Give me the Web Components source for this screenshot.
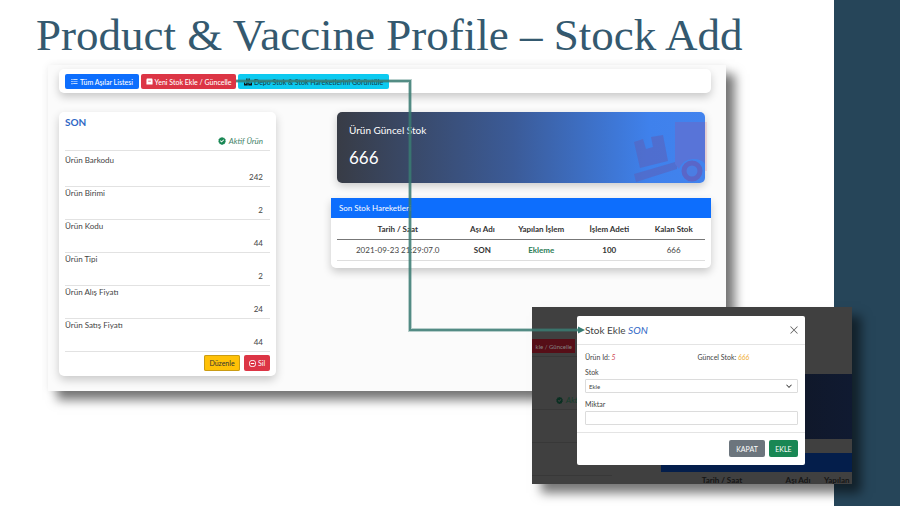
<!DOCTYPE html>
<html lang="tr">
<head>
<meta charset="utf-8">
<title>Product &amp; Vaccine Profile – Stock Add</title>
<style>
body { margin: 0; font-family: Lato, "Open Sans", sans-serif; color: #444; background: #fff; }
</style>
</head>
<body>
<deck-slide>
  <span slot="title">Product &amp; Vaccine Profile – Stock Add</span>
  <stock-page></stock-page>
  <modal-shot slot="inset"></modal-shot>
  <flow-arrow slot="arrow"></flow-arrow>
</deck-slide>

<script>
function define(name, html) {
  const t = document.createElement('template');
  t.innerHTML = html;
  customElements.define(name, class extends HTMLElement {
    constructor() {
      super();
      this.attachShadow({ mode: 'open' }).append(t.content.cloneNode(true));
    }
  });
}

define('deck-slide', `
<style>
:host { display: grid; grid-template-columns: minmax(0,1fr) 66px; min-height: 100vh; position: relative; overflow: hidden; }
main { padding: 10px 108px 0 48px; }
aside { background: #264559; }
h1 { margin: 0 -36px 5px -12px; font: 400 45px/50px "Liberation Serif", serif; color: #34596f; white-space: nowrap; }
.inset { position: absolute; right: 48px; top: 307px; }
.arrow { position: absolute; left: 236px; top: 78px; }
</style>
<main><h1><slot name="title"></slot></h1><slot></slot></main>
<aside></aside>
<div class="inset"><slot name="inset"></slot></div>
<div class="arrow"><slot name="arrow"></slot></div>`);

define('flow-arrow', `
<style>:host, svg { display: block; }</style>
<svg width="350" height="258" viewBox="0 0 350 258" fill="none" aria-hidden="true">
<path d="M0 3H174V252H343" stroke="#397b72" stroke-opacity=".35" stroke-width="4"/>
<path d="M0 3H174V252H343" stroke="#397b72" stroke-opacity=".8" stroke-width="2"/>
<path d="M342 248.500l7 3.500-7 3.500z" fill="#397b72"/>
</svg>`);

define('ui-icon', '<style>:host { display: inline-block; line-height: 0; } svg { display: block; width: 100%; height: 100%; }</style><svg viewBox="0 0 16 16" fill="currentColor" aria-hidden="true"></svg>');
const ICONS = {
  list: '<path d="M5 2.500h10v1.500H5zM5 7.200h10v1.500H5zM5 12h10v1.500H5zM1 2h2.500v2.500H1zM1 6.800h2.500v2.500H1zM1 11.500h2.500V14H1z"/>',
  box: '<path fill-rule="evenodd" d="M2 1h12l1 3v10a1 1 0 0 1-1 1H2a1 1 0 0 1-1-1V4zm3 5v2h6V6z"/>',
  boxes: '<path d="M4.500 1h2.500v3h2V1h2.500v6h-7zM0 9h2.500v3h2V9H7.500v6H0zM8.500 9H11v3h2V9h3v6H8.500z"/>',
  check: '<path fill-rule="evenodd" d="M8 0l2 1.400 2.500-.1.900 2.300 2 1.400-.6 2.600.8 2.400-1.800 1.700-.5 2.400-2.500.5L8 16l-2.300-1.400-2.500-.5-.6-2.400L.6 10l.8-2.400L.8 5l2-1.400.8-2.300 2.500.1zM4 8l3.200 3.200L12.300 6 11 4.800 7.200 8.600 5.300 6.700z"/>',
  minus: '<path fill-rule="evenodd" d="M8 0a8 8 0 1 0 0 16A8 8 0 0 0 8 0zm0 1.800a6.200 6.200 0 1 1 0 12.400A6.200 6.200 0 0 1 8 1.800zM4 7h8v2H4z"/>',
  close: '<path d="M1.500.5L8 7 14.500.5l1 1L9 8l6.500 6.500-1 1L8 9l-6.500 6.500-1-1L7 8 .5 1.500z"/>',
  down: '<path d="M2 4l6 6 6-6 1.500 1.500L8 13 .5 5.500z"/>'
};
function fillIcons(root) {
  root.querySelectorAll('ui-icon').forEach(i => {
    i.shadowRoot.querySelector('svg').innerHTML = ICONS[i.getAttribute('name')];
  });
}

define('ui-button', `
<style>
:host { display: block; }
button { display: flex; align-items: center; gap: 2px; width: 100%; height: 100%; justify-content: center; box-sizing: border-box; padding: 0 3px; border: 0; border-radius: 2px; margin: 0; font: inherit; white-space: nowrap; color: inherit; background: var(--bg); box-shadow: var(--edge, none); }
</style>
<button type="button"><slot></slot></button>`);

define('tool-bar', `
<style>
:host { display: flex; gap: 2px; padding: 5px 6px 4px; border-radius: 5px; background: #fff; box-shadow: 0 4px 8px #0003; font-size: 7px; font-weight: 500; color: #fff; }
ui-button { height: 15px; }
ui-icon { width: 7px; height: 7px; }
.a { --bg: #0d6efd; flex: 0 0 74px; } .b { --bg: #dc3545; flex: 0 0 95px; } .c { --bg: #0dcaf0; color: #12404c; flex: 0 0 151px; }
.c ui-icon { width: 8px; height: 8px; color: #111; }
</style>
<ui-button class="a"><ui-icon name="list"></ui-icon>Tüm Aşılar Listesi</ui-button>
<ui-button class="b"><ui-icon name="box"></ui-icon>Yeni Stok Ekle / Güncelle</ui-button>
<ui-button class="c"><ui-icon name="boxes"></ui-icon>Depo Stok &amp; Stok Hareketlerini Görüntüle</ui-button>`);

define('product-field', `
<style>
:host { display: block; height: 32px; border-bottom: 1px solid #e2e2e2; font-size: 8px; line-height: 12px; }
.v { text-align: right; padding: 5px 7px 0 0; }
</style>
<div><slot></slot></div><div class="v"><slot name="value"></slot></div>`);

define('product-card', `
<style>
:host { display: block; padding: 3px 6px 5px; border-radius: 5px; background: #fff; box-shadow: 0 4px 10px #0003; }
h2 { margin: 0; font-size: 10px; line-height: 14px; font-weight: 700; color: #2f68c5; }
.state { display: flex; justify-content: flex-end; align-items: center; gap: 3px; padding: 6px 7px 3px 0; border-bottom: 1px solid #e2e2e2; margin-bottom: 3px; font-size: 8px; line-height: 12px; font-style: italic; color: #45846a; }
.state ui-icon { width: 8px; height: 8px; color: #198754; }
footer { display: flex; justify-content: flex-end; gap: 4px; padding-top: 3px; font-size: 7px; }
ui-button { height: 16px; }
footer ui-icon { width: 7px; height: 7px; }
.e { --bg: #ffc107; --edge: inset 0 0 0 1px #c99b14; color: #333; flex: 0 0 36px; }
.d { --bg: #dc3545; color: #fff; flex: 0 0 26px; }
</style>
<h2>SON</h2>
<div class="state"><ui-icon name="check"></ui-icon>Aktif Ürün</div>
<product-field>Ürün Barkodu<span slot="value">242</span></product-field>
<product-field>Ürün Birimi<span slot="value">2</span></product-field>
<product-field>Ürün Kodu<span slot="value">44</span></product-field>
<product-field>Ürün Tipi<span slot="value">2</span></product-field>
<product-field>Ürün Alış Fiyatı<span slot="value">24</span></product-field>
<product-field>Ürün Satış Fiyatı<span slot="value">44</span></product-field>
<footer><ui-button class="e">Düzenle</ui-button><ui-button class="d"><ui-icon name="minus"></ui-icon>Sil</ui-button></footer>`);

define('stock-total', `
<style>
:host { display: flex; justify-content: space-between; margin: 0 6px; padding-left: 12px; border-radius: 5px; color: #fff; background: linear-gradient(90deg,#383c46,#3b5b98 48%,#3f81ec 85%,#4283ee); box-shadow: 0 3px 8px #0003; }
h3 { margin: 0; padding-top: 10px; font-size: 10px; line-height: 16px; font-weight: 400; }
p { margin: 0; padding: 7px 0 13px; font-size: 17px; line-height: 25px; }
svg { display: block; width: 76px; height: 71px; margin-right: -2px; }
</style>
<div><h3>Ürün Güncel Stok</h3><p>666</p></div>
<svg viewBox="0 0 76 71" aria-hidden="true">
<g fill="#5a62bd" fill-opacity=".6">
<path d="M3 30l9-3 3 10 7-2-2-10 12-2 5 26-28 7z"/>
<path d="M3 62l41-12h2v7L5 70z"/></g>
<path d="M44 10h30v42q-3-5-12-5-10 0-14 10l-4-5z" fill="#5874d8"/>
<path d="M74 10h2v49h-2z" fill="#d84a6a" opacity=".15"/>
<circle cx="61" cy="59" r="8" fill="#4b7de3" stroke="#5a66c8" stroke-width="5"/></svg>`);

define('stock-moves', `
<style>
:host { display: block; border-radius: 0 0 5px 5px; background: #fff; box-shadow: 0 4px 8px #0003; font-size: 8px; }
h3 { margin: 0; padding: 0 8px; background: #0d6efd; color: #fff; font-size: 8px; line-height: 20px; font-weight: 400; }
.body { padding: 1px 6px 7px; }
table { width: 100%; table-layout: fixed; border-collapse: collapse; text-align: center; line-height: 12px; }
th, td { padding: 4px 0; border-bottom: 1px solid #dedede; white-space: nowrap; }
thead th { border-color: #777; color: #333; }
tbody th { color: #333; } .g { color: #2d7d55; font-weight: 700; }
</style>
<h3>Son Stok Hareketleri</h3>
<div class="body"><table>
<colgroup><col style="width:33%"><col style="width:13%"><col style="width:19%"><col style="width:18%"><col style="width:17%"></colgroup>
<thead><tr><th>Tarih / Saat</th><th>Aşı Adı</th><th>Yapılan İşlem</th><th>İşlem Adeti</th><th>Kalan Stok</th></tr></thead>
<tbody><tr><td>2021-09-23 21:29:07.0</td><th>SON</th><td class="g">Ekleme</td><th>100</th><td>666</td></tr></tbody>
</table></div>`);

define('stock-page', `
<style>
:host { display: block; padding: 4px 15px 15px 11px; background: #fbfbfb; box-shadow: 9px 9px 10px #0008, 0 0 8px #0001; }
.cols { display: grid; grid-template-columns: 217fr 380fr; column-gap: 55px; padding-top: 19px; align-items: start; }
.right { display: grid; gap: 15px; }
</style>
<tool-bar></tool-bar>
<div class="cols"><product-card></product-card><div class="right"><stock-total></stock-total><stock-moves></stock-moves></div></div>`);

define('stock-modal', `
<style>
:host { display: block; border-radius: 2px; background: #fff; font-size: 7px; color: #444; }
header { display: flex; justify-content: space-between; align-items: center; padding: 0 7px 0 8px; border-bottom: 1px solid #e4e4e4; }
h2 { margin: 0; font-size: 10px; line-height: 28px; font-weight: 400; }
h2 em { color: #2f68c5; }
.x { display: block; padding: 0; border: 0; background: none; color: #555; line-height: 0; }
.x ui-icon { width: 8px; height: 8px; }
.body { padding: 6px 7px 7px 8px; border-bottom: 1px solid #e4e4e4; }
.info { display: grid; grid-template-columns: 1fr 1fr; line-height: 12px; padding-bottom: 4px; }
.info em { color: #cf4a58; } .info .n { color: #f0b03c; }
.info span + span { padding-left: 6px; }
label { display: block; line-height: 10px; padding-bottom: 2px; }
.pick { display: grid; align-items: center; margin-bottom: 6px; }
.pick > * { grid-area: 1/1; }
.pick ui-icon { width: 6px; height: 6px; justify-self: end; margin-right: 6px; pointer-events: none; color: #333; }
select, input { display: block; box-sizing: border-box; width: 100%; height: 14px; margin: 0; padding: 0 3px; border: 1px solid #dcdcdc; border-radius: 1px; background: #fff; appearance: none; font: inherit; font-size: 6px; color: #444; }
footer { display: flex; justify-content: flex-end; gap: 4px; padding: 7px 7px 8px; color: #fff; font-size: 7px; }
ui-button { height: 17px; }
.k { --bg: #6c757d; flex: 0 0 36px; } .e { --bg: #198754; flex: 0 0 29px; }
</style>
<header><h2>Stok Ekle <em>SON</em></h2><button class="x" type="button" aria-label="Kapat"><ui-icon name="close"></ui-icon></button></header>
<div class="body">
<div class="info"><span>Ürün Id: <em>5</em></span><span>Güncel Stok: <em class="n">666</em></span></div>
<label for="s">Stok</label><div class="pick"><select id="s"><option>Ekle</option></select><ui-icon name="down"></ui-icon></div>
<label for="m">Miktar</label><input id="m" type="text">
</div>
<footer><ui-button class="k">KAPAT</ui-button><ui-button class="e">EKLE</ui-button></footer>`);

define('modal-shot', `
<style>
:host { display: grid; grid-template-columns: 80px 191px; justify-content: space-between; align-content: start; width: 320px; height: 177px; overflow: hidden; background: #404040; color: #151515; font-size: 8px; box-shadow: 9px 9px 10px #0008; position: relative; }
.l .b { display: flex; align-items: center; justify-content: flex-end; width: 43px; height: 14px; margin-top: 32px; box-sizing: border-box; padding-right: 3px; background: #560e17; color: #858585; font-size: 6px; white-space: nowrap; }
.edge { height: 3px; border-bottom: 1px solid #383838; margin-bottom: 37px; }
.act { display: flex; align-items: center; gap: 3px; padding: 0 0 3px 24px; line-height: 12px; font-style: italic; color: #153e2c; }
.act ui-icon { width: 7px; height: 7px; color: #092f21; }
.row { height: 32px; border-top: 1px solid #383838; }
.r { padding-top: 50px; }
.g { height: 65px; margin-top: 17px; margin-left: 6px; background: linear-gradient(90deg,#0f1218,#101a31); }
.h { height: 19px; margin-top: 14px; background: #041e4b; }
.t { display: grid; grid-template-columns: 122px 30px 1fr; line-height: 16px; font-weight: 700; text-align: center; white-space: nowrap; }
.t span:last-child { text-align: left; padding-left: 11px; }
stock-modal { position: absolute; left: 45px; right: 47px; top: 9px; }
</style>
<div class="l"><div class="b">kle / Güncelle</div><div class="edge"></div>
<div class="act"><ui-icon name="check"></ui-icon>Akt</div><div class="row"></div><div class="row"></div><div class="row"></div></div>
<div class="r"><div class="g"></div><div class="h"></div><div class="t"><span>Tarih / Saat</span><span>Aşı Adı</span><span>Yapılan</span></div></div>
<stock-modal></stock-modal>`);

(function walk(root) {
  fillIcons(root);
  root.querySelectorAll('*').forEach(e => e.shadowRoot && walk(e.shadowRoot));
})(document);
</script>
</body>
</html>
